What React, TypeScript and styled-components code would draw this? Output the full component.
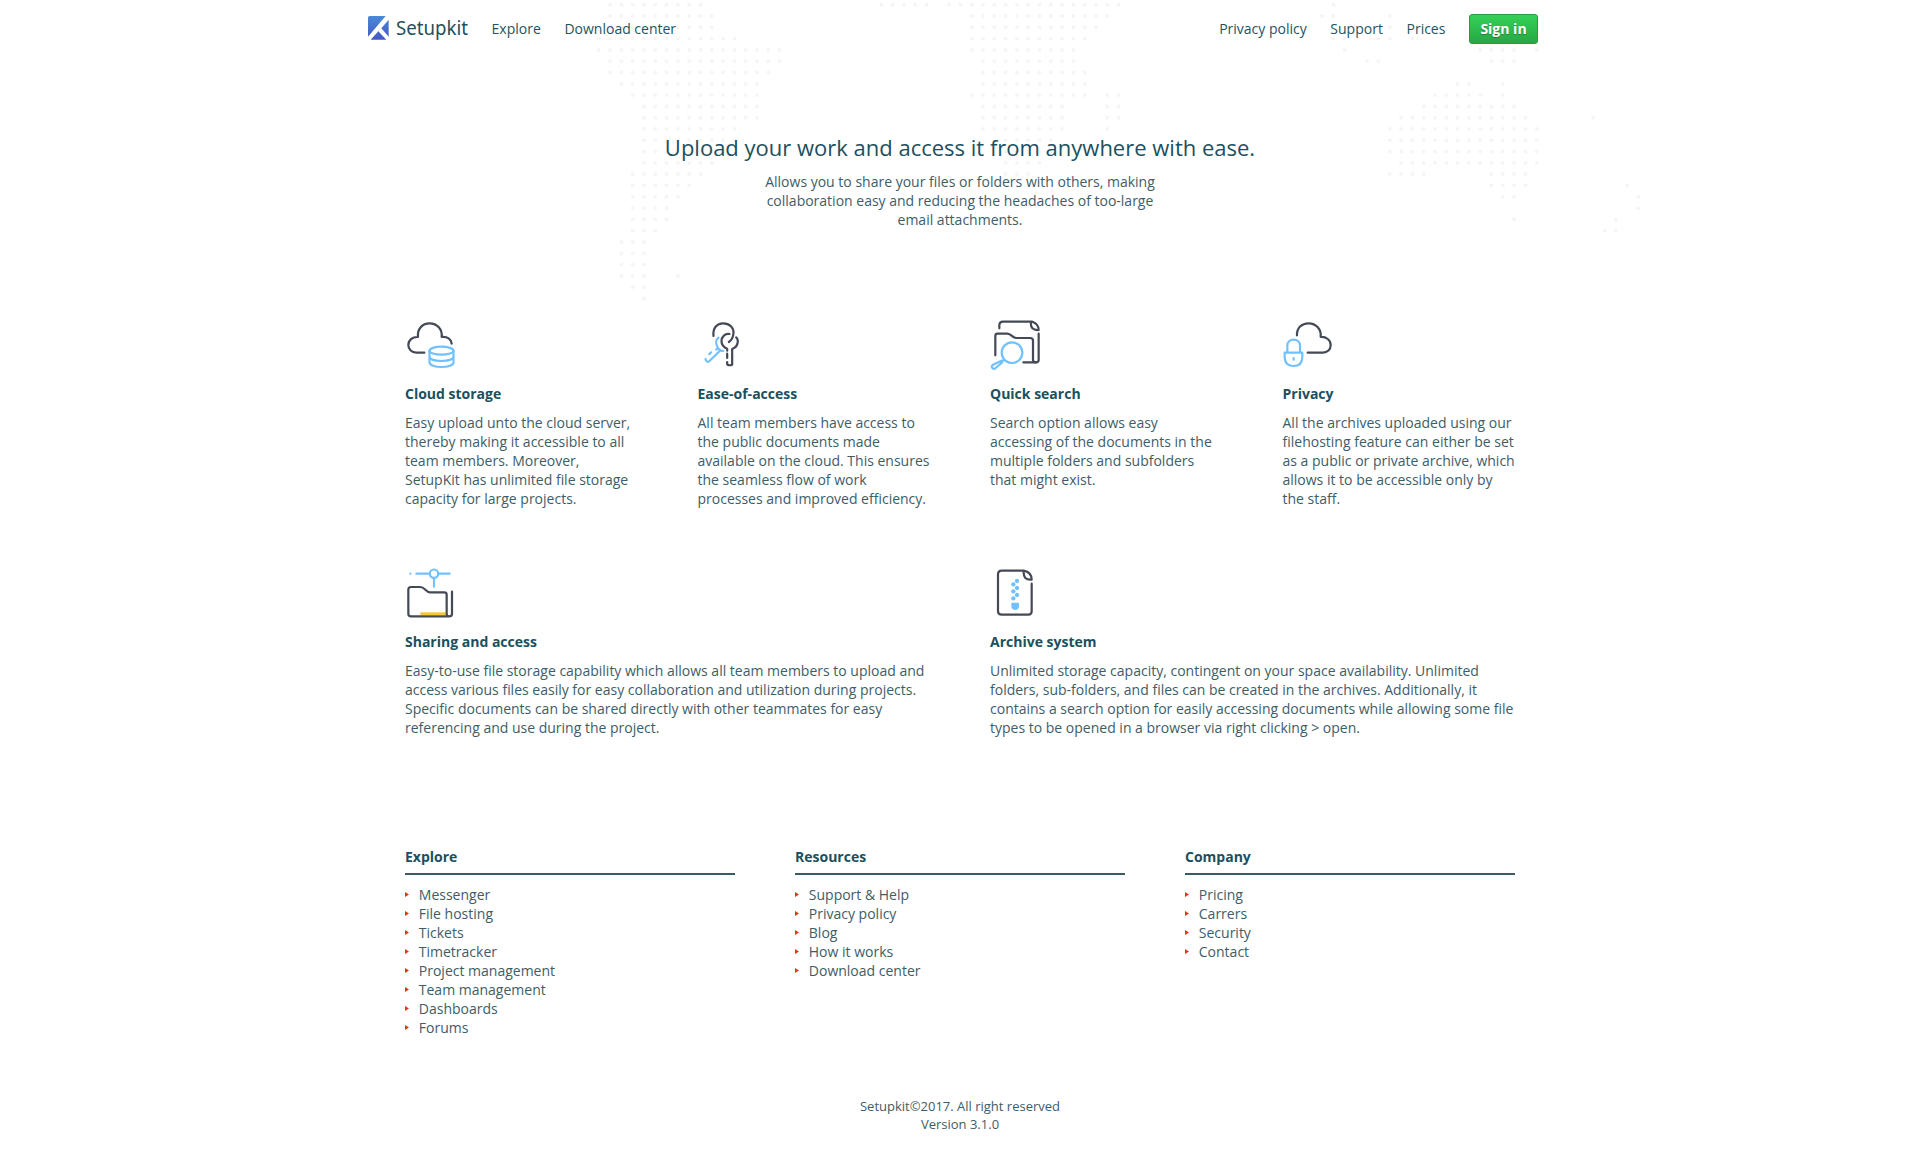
import React from 'react';
import styled, { createGlobalStyle } from 'styled-components';

const GlobalStyle = createGlobalStyle`
  * { box-sizing: border-box; }
  html, body { margin: 0; padding: 0; }
  body {
    background: #fff;
    color: #3d5d67;
    font-family: "Open Sans", "Noto Sans", sans-serif;
    font-size: 14px;
    line-height: 19px;
  }
`;

const Page = styled.div`
  position: relative;
  min-height: 1153px;
`;

const MapLayer = styled.svg`
  position: absolute;
  top: 0;
  left: 50%;
  width: 1140px;
  height: 320px;
  margin-left: -370px;
  z-index: -1;
  fill: #f5f5f6;
`;

const Header = styled.header`
  width: 1184px;
  height: 58px;
  margin: 0 auto;
  padding-right: 14px;
  display: flex;
  align-items: center;
  justify-content: space-between;
`;

const NavGroup = styled.nav`
  display: flex;
  align-items: center;
  gap: 23.6px;
`;

const Logo = styled.a`
  display: flex;
  align-items: center;
  margin-top: -2px;
`;

const LogoMark = styled.svg`
  width: 21px;
  height: 24px;
`;

const LogoText = styled.svg`
  width: 72px;
  height: 24px;
  margin-left: 7px;
  overflow: visible;
  font-family: "Noto Sans", "Open Sans", sans-serif;
  font-size: 20px;
  fill: #23505a;
`;

const NavLink = styled.a`
  margin-top: -2px;
  color: #1f5361;
  cursor: pointer;
`;

const SignIn = styled.button`
  height: 30px;
  width: 69px;
  padding: 0 0 2px;
  border: 1px solid #259d3d;
  border-radius: 3px;
  background: linear-gradient(#35d058, #28a745);
  color: #fff;
  font: bold 14px/19px "Open Sans", sans-serif;
  text-shadow: 0 1px 1px rgba(0, 0, 0, 0.3);
`;

const Hero = styled.section`
  padding-top: 74px;
  text-align: center;
`;

const HeroTitle = styled.h1`
  margin: 0;
  color: #1c505e;
  font-size: 22px;
  font-weight: 400;
  line-height: 30px;
`;

const HeroText = styled.p`
  width: 400px;
  margin: 10px auto 0;
`;

const Features = styled.section`
  width: 1170px;
  margin: 91px auto 0;
  display: grid;
  grid-template-columns: repeat(4, 1fr);
  row-gap: 60px;
`;

const Feature = styled.article<{ $span?: number }>`
  grid-column: span ${(p) => p.$span ?? 1};
  padding: 0 30px;
`;

const FeatureIcon = styled.svg`
  display: block;
  width: 50px;
  height: 50px;
  overflow: visible;
  fill: none;
  stroke: #444955;
  stroke-width: 6.6;
  stroke-linecap: round;
  stroke-linejoin: round;

  .blue { stroke: #72c1fd; }
  .dot { stroke: none; fill: #72c1fd; }
  .gold { stroke: #fbc536; }
`;

const Heading = styled.h2`
  margin: 0;
  color: #1b505e;
  font-size: 14px;
  font-weight: 700;
  line-height: 19px;
`;

const FeatureTitle = styled(Heading)`
  margin-top: 14px;
`;

const FeatureText = styled.p`
  margin: 10px 0 0;
`;

const Footer = styled.footer`
  width: 1170px;
  margin: 110px auto 0;
  display: grid;
  grid-template-columns: repeat(3, 1fr);
`;

const FooterColumn = styled.div`
  padding: 0 30px;
`;

const FooterTitle = styled(Heading)`
  padding-bottom: 7px;
  border-bottom: 2px solid #3b5a63;
`;

const LinkList = styled.ul`
  margin: 10px 0 0;
  padding: 0;
  list-style: none;
`;

const LinkItem = styled.li`
  display: flex;
  align-items: center;

  &::before {
    content: "";
    width: 4px;
    height: 5px;
    margin-right: 9.8px;
    background: #e5341a;
    clip-path: polygon(0 0, 100% 50%, 0 100%);
  }
`;

const Copyright = styled.div`
  margin-top: 60px;
  text-align: center;
  font-size: 13px;
  line-height: 18px;
`;

/* Filled column ranges of the dotted world map, one list per row. */
const mapRows: [number, number][][] = [
  [[1, 9], [25, 29], [31, 46], [65, 65]],
  [[1, 10], [33, 45], [64, 65], [70, 70]],
  [[1, 10], [33, 44], [70, 70]],
  [[0, 12], [33, 43], [65, 66], [69, 70], [72, 72]],
  [[0, 16], [33, 42], [66, 66], [78, 81], [83, 83]],
  [[1, 16], [34, 42], [68, 69], [79, 81]],
  [[1, 15], [34, 43]],
  [[2, 14], [34, 43], [76, 77], [80, 80]],
  [[3, 14], [33, 43], [45, 46], [74, 78], [80, 80]],
  [[4, 14], [34, 41], [45, 46], [73, 81]],
  [[4, 14], [34, 41], [45, 46], [71, 82], [88, 88]],
  [[4, 12], [34, 41], [45, 45], [70, 83]],
  [[4, 12], [36, 40], [70, 83]],
  [[4, 11], [36, 40], [70, 83]],
  [[4, 10], [36, 39], [71, 83]],
  [[3, 9], [36, 38], [70, 73], [79, 82]],
  [[3, 8], [79, 82], [91, 91]],
  [[3, 7], [80, 81], [92, 92]],
  [[3, 6], [92, 92]],
  [[3, 6], [81, 81], [90, 90]],
  [[3, 5], [89, 90]],
  [[2, 4]],
  [[2, 4]],
  [[2, 4]],
  [[2, 4], [7, 7]],
  [[3, 4]],
  [[4, 4]],
];

const STEP = 11.3;

const WorldMap = () => (
  <MapLayer>
    {mapRows.map((ranges, row) =>
      ranges.map(([from, to]) =>
        Array.from({ length: to - from + 1 }, (_, k) => (
          <circle key={`${row}-${from + k}`} cx={8.8 + (from + k) * STEP} cy={4.7 + row * STEP} r={1.9} />
        )),
      ),
    )}
  </MapLayer>
);

const CloudIcon = () => (
  <FeatureIcon viewBox="30 30 150 150">
    <path d="M88 128H64C49 128 40 117 40 105C40 91 52 80 69 81C66 57 82 40 104 40C126 40 143 58 140 81C157 79 169 88 170 101" />
    <g className="blue">
      <ellipse cx="139.5" cy="122" rx="36" ry="12" />
      <path d="M103.5 122V158C104 165 119 171 139.5 171S175 165 175.5 158V122M103.5 140C104 148 119 153 139.5 153S175 148 175.5 140" />
    </g>
  </FeatureIcon>
);

const KeysIcon = () => (
  <FeatureIcon viewBox="23.5 30 150 150">
    <g className="blue">
      <path d="M85 83C77 89 76 100 81 109L84 116L91 121L99 123M91 121L57 154Q53 157 48 153L46 147M57 133L63 127M78 119L84 114" />
    </g>
    <path d="M70 78C67 55 80 40 99 40C119 40 131 53 130 69C129 82 124 91 116 96" />
    <path d="M118 72C105 70 94 80 94 94C94 104 101 112 111 116V122M126 164V117C137 113 143 104 143 93Q143 86 138 82M111 131V144M111 156V163Q117 168 126 164" />
  </FeatureIcon>
);

const SearchIcon = () => (
  <FeatureIcon viewBox="30 30 150 150">
    <path d="M58 55V46Q58 35 69 35H157Q176 42 176 60Q150 62 153 36M176 71V149Q176 157 168 157H130" />
    <path d="M46 136V78Q46 71 53 71H82C94 71 97 84 108 84H151Q159 84 159 92V149Q159 157 168 157" />
    <g className="blue">
      <circle cx="96" cy="128" r="31" />
      <path d="M72 151L66 154M64 152L38 165Q33 170 38 175Q42 179 47 174L66 158Q68 152 64 152Z" />
    </g>
  </FeatureIcon>
);

const PrivacyIcon = () => (
  <FeatureIcon viewBox="39 30 150 150">
    <path d="M81 76C80 54 95 40 116 40C138 40 155 58 152 81C169 80 182 90 182 105C182 119 172 128 159 128H113" />
    <g className="blue">
      <path d="M52 126V107C52 83 90 83 90 107V126M44 128H97V141C97 160 87 168 71 168S44 160 44 141Z" />
      <path d="M71 144V149" />
    </g>
  </FeatureIcon>
);

const SharingIcon = () => (
  <FeatureIcon viewBox="30 24 150 150">
    <path className="gold" strokeWidth="8" strokeLinecap="butt" d="M76 161H152" />
    <path d="M171 95V161Q171 169 163 169H48Q40 169 40 161V89Q40 81 48 81H75C90 81 92 97 105 97H148Q155 97 155 104V161Q155 169 163 169" />
    <g className="blue">
      <path d="M64 41H103M130 41H164M117 55V80M46 41H46.1" />
      <circle cx="117" cy="41" r="12.5" />
    </g>
  </FeatureIcon>
);

const ArchiveIcon = () => (
  <FeatureIcon viewBox="30 24 150 150">
    <path d="M155 71V154Q155 164 145 164H65Q54 164 54 154V43Q54 32 65 32H131Q155 37 155 59Q129 61 131 34" />
    <g className="dot">
      <circle cx="111" cy="63" r="6.5" />
      <circle cx="100" cy="73" r="6.5" />
      <circle cx="111" cy="84" r="6.5" />
      <circle cx="100" cy="94" r="6.5" />
      <circle cx="111" cy="105" r="6.5" />
      <circle cx="100" cy="115" r="6.5" />
      <path d="M94 131Q94 128 97 128H114Q117 128 117 131V139C117 154 94 154 94 139Z" />
    </g>
  </FeatureIcon>
);

const features = [
  { Icon: CloudIcon, title: 'Cloud storage', span: 1, lines: ['Easy upload unto the cloud server,', 'thereby making it accessible to all', 'team members. Moreover,', 'SetupKit has unlimited file storage', 'capacity for large projects.'] },
  { Icon: KeysIcon, title: 'Ease-of-access', span: 1, lines: ['All team members have access to', 'the public documents made', 'available on the cloud. This ensures', 'the seamless flow of work', 'processes and improved efficiency.'] },
  { Icon: SearchIcon, title: 'Quick search', span: 1, lines: ['Search option allows easy', 'accessing of the documents in the', 'multiple folders and subfolders', 'that might exist.'] },
  { Icon: PrivacyIcon, title: 'Privacy', span: 1, lines: ['All the archives uploaded using our', 'filehosting feature can either be set', 'as a public or private archive, which', 'allows it to be accessible only by', 'the staff.'] },
  { Icon: SharingIcon, title: 'Sharing and access', span: 2, lines: ['Easy-to-use file storage capability which allows all team members to upload and', 'access various files easily for easy collaboration and utilization during projects.', 'Specific documents can be shared directly with other teammates for easy', 'referencing and use during the project.'] },
  { Icon: ArchiveIcon, title: 'Archive system', span: 2, lines: ['Unlimited storage capacity, contingent on your space availability. Unlimited', 'folders, sub-folders, and files can be created in the archives. Additionally, it', 'contains a search option for easily accessing documents while allowing some file', 'types to be opened in a browser via right clicking > open.'] },
];

const footerColumns = [
  { title: 'Explore', links: ['Messenger', 'File hosting', 'Tickets', 'Timetracker', 'Project management', 'Team management', 'Dashboards', 'Forums'] },
  { title: 'Resources', links: ['Support & Help', 'Privacy policy', 'Blog', 'How it works', 'Download center'] },
  { title: 'Company', links: ['Pricing', 'Carrers', 'Security', 'Contact'] },
];

const Lines = ({ lines }: { lines: string[] }) => (
  <>
    {lines.map((line, i) => (
      <React.Fragment key={line}>
        {i > 0 && <br />}
        {line}
      </React.Fragment>
    ))}
  </>
);

export default function App() {
  return (
    <Page>
      <GlobalStyle />
      <WorldMap />
      <Header>
        <NavGroup>
          <Logo>
            <LogoMark viewBox="0 0 63 72">
              <defs>
                <linearGradient id="mark" x1="0" y1="0" x2="0" y2="72" gradientUnits="userSpaceOnUse">
                  <stop offset="0" stopColor="#4a8ad6" />
                  <stop offset="1" stopColor="#4556c4" />
                </linearGradient>
              </defs>
              <path fill="url(#mark)" d="M5 0H53L0 62V5Q0 0 5 0ZM62 11V62L40 37ZM31 46L55 71H8Z" />
            </LogoMark>
            <LogoText>
              <text x="0" y="19" textLength="72" lengthAdjust="spacingAndGlyphs">Setupkit</text>
            </LogoText>
          </Logo>
          <NavLink>Explore</NavLink>
          <NavLink>Download center</NavLink>
        </NavGroup>
        <NavGroup>
          <NavLink>Privacy policy</NavLink>
          <NavLink>Support</NavLink>
          <NavLink>Prices</NavLink>
          <SignIn>Sign in</SignIn>
        </NavGroup>
      </Header>
      <Hero>
        <HeroTitle>Upload your work and access it from anywhere with ease.</HeroTitle>
        <HeroText>
          <Lines lines={['Allows you to share your files or folders with others, making', 'collaboration easy and reducing the headaches of too-large', 'email attachments.']} />
        </HeroText>
      </Hero>
      <Features>
        {features.map(({ Icon, title, span, lines }) => (
          <Feature key={title} $span={span}>
            <Icon />
            <FeatureTitle>{title}</FeatureTitle>
            <FeatureText>
              <Lines lines={lines} />
            </FeatureText>
          </Feature>
        ))}
      </Features>
      <Footer>
        {footerColumns.map((column) => (
          <FooterColumn key={column.title}>
            <FooterTitle>{column.title}</FooterTitle>
            <LinkList>
              {column.links.map((link) => (
                <LinkItem key={link}>{link}</LinkItem>
              ))}
            </LinkList>
          </FooterColumn>
        ))}
      </Footer>
      <Copyright>
        Setupkit©2017. All right reserved
        <br />
        Version 3.1.0
      </Copyright>
    </Page>
  );
}
